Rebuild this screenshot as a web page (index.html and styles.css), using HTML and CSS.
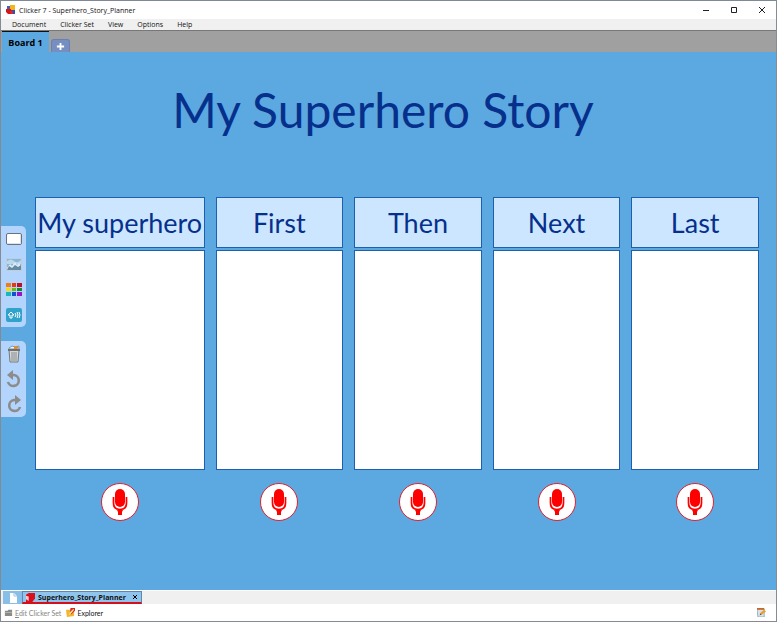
FILE: index.html
```html
<!DOCTYPE html>
<html lang="en">
	<head>
		<meta charset="UTF-8" />
		<meta name="viewport" content="width=device-width, initial-scale=1.0" />
		<title>Clicker 7 - Superhero_Story_Planner</title>
		<link rel="stylesheet" href="styles.css">
	</head>
	<body>
		<!-- shared icons -->
		<svg class="defs" aria-hidden="true">
			<symbol id="mic" viewBox="0 0 36 36">
				<rect x="13" y="5" width="10" height="18" rx="5" fill="#f00" />
				<path d="M11.500 13V19C11.500 23 14 25.500 18 25.500S24.500 23 24.500 19V13" fill="none" stroke="#f00" stroke-width="1.700" />
				<path d="M15 26H21L20 28V31H16V28Z" fill="#f00" />
			</symbol>
			<symbol id="undo" viewBox="0 0 18 18">
				<path d="M6 5H9A5.500 5.500 0 1 1 3 12" fill="none" stroke="#8c8c8c" stroke-width="2.600" />
				<path d="M2 5L8 0V10Z" fill="#8c8c8c" />
			</symbol>
		</svg>

		<header class="titlebar">
			<svg class="logo" viewBox="0 0 10 10" aria-hidden="true">
				<rect x="1" y="1" width="3" height="4" fill="#3a63b4" />
				<rect x="4" y="0" width="5" height="5" fill="#f5b416" />
				<path d="M0 4H5V9H2L0 7Z" fill="#d8141c" />
				<path d="M5 5H9V9H5Z" fill="#2456b8" />
				<path d="M4 6H7V9H4Z" fill="#e8202a" />
			</svg>
			<h1>Clicker 7 - Superhero_Story_Planner</h1>
			<div class="window-buttons">
				<button aria-label="Minimize"><svg viewBox="0 0 8 8"><path d="M1 4.500H7" /></svg></button>
				<button aria-label="Maximize"><svg viewBox="0 0 8 8"><path d="M1.500 1.500H6.500V6.500H1.500Z" /></svg></button>
				<button aria-label="Close"><svg viewBox="0 0 8 8"><path d="M1 1L7 7M7 1L1 7" /></svg></button>
			</div>
		</header>

		<nav class="menu">
			<button>Document</button>
			<button>Clicker Set</button>
			<button>View</button>
			<button>Options</button>
			<button>Help</button>
		</nav>

		<div class="board-tabs">
			<button class="board-tab">Board 1</button>
			<button class="add-tab" aria-label="Add board">
				<svg viewBox="0 0 10 10"><path d="M5 1V9M1 5H9" stroke="#fff" stroke-width="2" /></svg>
			</button>
		</div>

		<main class="board">
			<aside class="tools">
				<div class="tool-group">
					<button aria-label="Cell">
						<svg viewBox="0 0 18 18">
							<rect x="1.500" y="3.500" width="15" height="11" rx="1.500" fill="#fff" stroke="#69727e" />
							<path d="M3 13.500H15.500V5" fill="none" stroke="#dfe3e8" />
						</svg>
					</button>
					<button aria-label="Picture">
						<svg viewBox="0 0 18 18">
							<rect x="1.500" y="3.500" width="15" height="12" fill="#82b8df" stroke="#c4cdd7" />
							<path d="M2 6Q6 3 9 6T16 5V9H2Z" fill="#b9d8ee" />
							<path d="M2 13L5 9L7 11L10 7L12 10L14 8L16 11V15H2Z" fill="#e2eaf0" />
							<path d="M2 15L4 11L7 13L10 10L13 12L16 10V15Z" fill="#648ba6" />
						</svg>
					</button>
					<button aria-label="Colours">
						<svg viewBox="0 0 18 18">
							<path d="M1 3H6V7H1Z" fill="#f47a12" />
							<path d="M7 3H11V7H7Z" fill="#e33b16" />
							<path d="M12 3H17V7H12Z" fill="#c40f22" />
							<path d="M1 8H6V11H1Z" fill="#f5d90b" />
							<path d="M7 8H11V11H7Z" fill="#65bd16" />
							<path d="M12 8H17V11H12Z" fill="#108b25" />
							<path d="M1 12H6V16H1Z" fill="#16b8c0" />
							<path d="M7 12H11V16H7Z" fill="#1451cf" />
							<path d="M12 12H17V16H12Z" fill="#9713cb" />
						</svg>
					</button>
					<button aria-label="Sound">
						<svg viewBox="0 0 18 18">
							<rect x="1" y="3" width="16" height="14" rx="2" fill="#30a3cd" />
							<path d="M3 10L6 7L9 10H7V13H5V10Z" fill="none" stroke="#fff" />
							<path d="M10 8Q12 10 10 12M12 7Q14 10 12 13M14 7Q16 10 14 13" fill="none" stroke="#fff" />
						</svg>
					</button>
				</div>
				<div class="tool-group">
					<button aria-label="Delete">
						<svg viewBox="0 0 18 18">
							<path d="M4 3L7 1L10 2L14 1V4H4Z" fill="#eff5fa" stroke="#759bbb" />
							<path d="M9 1L14 2L12 4H9Z" fill="#e88921" />
							<path d="M4 5H14L13 17H5Z" fill="#d5d7d7" stroke="#74787b" />
							<path d="M7 7V16M9 7V16M11 7V16" stroke="#888c8f" />
							<path d="M3 5H15" stroke="#6d7072" stroke-width="2" />
						</svg>
					</button>
					<button aria-label="Undo"><svg><use href="#undo" /></svg></button>
					<button aria-label="Redo"><svg class="flip"><use href="#undo" /></svg></button>
				</div>
			</aside>

			<div class="planner">
				<h2>My Superhero Story</h2>
				<div class="columns">
					<section class="column">
						<label for="superhero">My superhero</label>
						<textarea id="superhero"></textarea>
						<button class="record" aria-label="Record my superhero"><svg><use href="#mic" /></svg></button>
					</section>
					<section class="column">
						<label for="first">First</label>
						<textarea id="first"></textarea>
						<button class="record" aria-label="Record first"><svg><use href="#mic" /></svg></button>
					</section>
					<section class="column">
						<label for="then">Then</label>
						<textarea id="then"></textarea>
						<button class="record" aria-label="Record then"><svg><use href="#mic" /></svg></button>
					</section>
					<section class="column">
						<label for="next">Next</label>
						<textarea id="next"></textarea>
						<button class="record" aria-label="Record next"><svg><use href="#mic" /></svg></button>
					</section>
					<section class="column">
						<label for="last">Last</label>
						<textarea id="last"></textarea>
						<button class="record" aria-label="Record last"><svg><use href="#mic" /></svg></button>
					</section>
				</div>
			</div>
		</main>

		<div class="file-tabs">
			<button class="new-file" aria-label="New document">
				<svg viewBox="0 0 10 10"><path d="M2 0H6L9 3V10H2Z" fill="#fff" /><path d="M6 0V3H9" fill="none" stroke="#9dc4e4" /></svg>
			</button>
			<div class="file-tab">
				<svg viewBox="0 0 10 10" aria-hidden="true">
					<path d="M0 2L3 0H10V6L7 10H0Z" fill="#d9101c" />
					<path d="M0 3L3 4V9L0 7Z" fill="#f6c9ce" />
				</svg>
				<span>Superhero_Story_Planner</span>
				<button aria-label="Close file"><svg viewBox="0 0 6 6"><path d="M1 1L5 5M5 1L1 5" stroke="#000" /></svg></button>
			</div>
		</div>

		<footer class="status">
			<button disabled>
				<svg viewBox="0 0 10 10"><path d="M1 3H4L5 2H9V9H1Z" fill="#8a8a8a" /><path d="M1 5H9" stroke="#b4b4b4" /></svg>
				<span><u>E</u>dit Clicker Set</span>
			</button>
			<button>
				<svg viewBox="0 0 10 10"><path d="M0 2H4L5 3H9V9L1 10Z" fill="#f2b52c" /><path d="M5 0H10V3L6 7H4Z" fill="#d32b27" /><path d="M3 8L4 5L8 1L9 2L5 7Z" fill="#ffe48b" /></svg>
				<span>Explorer</span>
			</button>
			<button class="notes" aria-label="Notes">
				<svg viewBox="0 0 10 10"><path d="M0 1H8V10H1Z" fill="#d5e2ef" stroke="#91a9bf" /><path d="M0 0H8V2H0Z" fill="#c76a27" /><path d="M3 8L4 5L8 2L10 4L6 7Z" fill="#eda02b" /><path d="M3 8L4 6L5 7Z" fill="#333" /></svg>
			</button>
		</footer>
	</body>
</html>
```
FILE: styles.css
```css
* {
	box-sizing: border-box;
}
body {
	margin: 0;
	min-height: 100vh;
	display: flex;
	flex-direction: column;
	border: 1px solid #858b93;
	border-top-color: #7e8998;
	background: #fff;
	font-family: "Open Sans", "Noto Sans", sans-serif;
	font-size: 7px;
	color: #111;
}
h1,
h2 {
	margin: 0;
	font-weight: normal;
}
button {
	margin: 0;
	padding: 0;
	border: 0;
	background: none;
	font: inherit;
	color: inherit;
}
svg {
	display: block;
}
.defs {
	position: absolute;
	width: 0;
	height: 0;
}

/* window */
.titlebar {
	display: flex;
	align-items: center;
	height: 18px;
	padding: 0 10px 0 5px;
}
.logo {
	width: 10px;
	height: 10px;
	margin-right: 3px;
}
.titlebar h1 {
	font-size: 7px;
}
.window-buttons {
	display: flex;
	gap: 20px;
	margin-left: auto;
}
.window-buttons svg {
	width: 8px;
	height: 8px;
	fill: none;
	stroke: #222;
}
.menu {
	display: flex;
	gap: 14px;
	height: 12px;
	padding-left: 11px;
	background: #f0f0f0;
	border-bottom: 1px solid #777;
	line-height: 12px;
}
.board-tabs {
	display: flex;
	align-items: flex-end;
	gap: 2px;
	height: 21px;
	padding-left: 1px;
	background: #a0a0a0;
}
.board-tab {
	height: 21px;
	width: 47px;
	border-top: 1px solid #111;
	background: #5ca9e1;
	font-size: 9px;
	font-weight: bold;
	color: #000;
}
.add-tab {
	display: flex;
	align-items: center;
	justify-content: center;
	width: 19px;
	height: 13px;
	border: 1px solid #6980b0;
	border-bottom: 0;
	border-radius: 3px 3px 0 0;
	background: #768fc0;
}
.add-tab svg {
	width: 9px;
	height: 9px;
}

/* board */
.board {
	flex: 1;
	display: flex;
	background: #5ca9e1;
}
.tools {
	display: flex;
	flex-direction: column;
	gap: 14px;
	width: 25px;
	padding-top: 174px;
}
.tool-group {
	display: flex;
	flex-direction: column;
	align-items: center;
	gap: 7px;
	padding: 4px 0;
	border-radius: 0 5px 5px 0;
	background: #b3d4fd;
}
.tool-group svg {
	width: 18px;
	height: 18px;
}
.flip {
	transform: scaleX(-1);
}
.planner {
	flex: 1;
	display: flex;
	flex-direction: column;
	padding: 28px 17px 69px 9px;
	font-family: Lato, "Open Sans", sans-serif;
	color: #06308c;
}
.planner h2 {
	margin-bottom: 57px;
	padding-right: 28px;
	font-size: 48px;
	line-height: 60px;
	text-align: center;
}
.columns {
	flex: 1;
	display: grid;
	grid-template-columns: 170fr 128fr 128fr 128fr 128fr;
	gap: 11px;
}
.column {
	display: flex;
	flex-direction: column;
	align-items: center;
	min-width: 0;
}
.column label {
	width: 100%;
	height: 51px;
	margin-bottom: 2px;
	border: 1px solid #1f5fb0;
	background: #cce6ff;
	font-size: 27px;
	line-height: 50px;
	text-align: center;
	white-space: nowrap;
}
.column textarea {
	flex: 1;
	width: 100%;
	margin-bottom: 13px;
	border: 1px solid #1f5fb0;
	border-radius: 0;
	background: #fff;
	resize: none;
}
.record {
	width: 38px;
	height: 38px;
	border: 1px solid #e0202c;
	border-radius: 50%;
	background: #fff;
}
.record svg {
	width: 36px;
	height: 36px;
}

/* open files and status bar */
.file-tabs {
	display: flex;
	height: 14px;
	padding-left: 2px;
	background: #f0f0f0;
	border-top: 1px solid #fff;
}
.new-file {
	display: flex;
	align-items: center;
	justify-content: center;
	width: 19px;
	background: #88bfe9;
}
.new-file svg {
	width: 10px;
	height: 10px;
}
.file-tab {
	display: flex;
	align-items: center;
	gap: 3px;
	padding: 0 3px;
	border: 1px solid #5b87b0;
	border-bottom: 2px solid #d3101c;
	background: #8fc4ec;
	font-weight: bold;
}
.file-tab svg {
	width: 9px;
	height: 9px;
}
.file-tab button {
	margin-left: 3px;
}
.file-tab button svg {
	width: 6px;
	height: 6px;
}
.status {
	display: flex;
	align-items: center;
	gap: 5px;
	height: 17px;
	padding: 0 10px 0 3px;
	font-family: Lato, "Open Sans", sans-serif;
}
.status button {
	display: flex;
	align-items: center;
	gap: 2px;
}
.status button:disabled {
	color: #858585;
}
.status svg {
	width: 9px;
	height: 9px;
}
.status .notes {
	margin-left: auto;
}
```
